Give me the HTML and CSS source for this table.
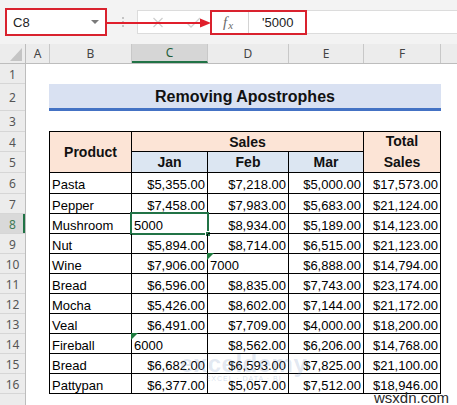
FILE: index.html
```html
<!DOCTYPE html>
<html>
<head>
<meta charset="utf-8">
<link rel="stylesheet" href="styles.css">
</head>
<body>
<div class="app">
  <div class="toolbar">
    <div class="namebox"><span class="ref">C8</span><span class="dd"></span></div>
    <div class="grip">
      <svg width="4" height="12" viewBox="0 0 4 12"><circle cx="2" cy="2" r="1" fill="#b4b4b4"/><circle cx="2" cy="6" r="1" fill="#b4b4b4"/><circle cx="2" cy="10" r="1" fill="#b4b4b4"/></svg>
    </div>
    <div class="actions">
      <svg class="ico-x" width="12" height="11" viewBox="0 0 12 11"><path d="M1.5 1 L10.5 10 M10.5 1 L1.5 10" stroke="#cfcfcf" stroke-width="1.3" fill="none"/></svg>
      <svg class="ico-ok" width="15" height="11" viewBox="0 0 15 11"><path d="M1 6 L5 10 L14 1" stroke="#cfcfcf" stroke-width="1.3" fill="none"/></svg>
    </div>
    <div class="fxbox">
      <span class="fx"><i>f</i><i class="sx">x</i></span>
      <span class="ftext">'5000</span>
    </div>
    <div class="fbar"></div>
    <svg class="arrow" width="110" height="14" viewBox="0 0 110 14"><path d="M0 7 L96 7" stroke="#e01e2b" stroke-width="2"/><polygon points="94,2.5 105,7 94,11.5" fill="#e01e2b"/></svg>
  </div>

  <div class="sheet">
    <div class="corner"><svg width="26" height="20" viewBox="0 0 26 20"><polygon points="22,4 22,17 10,17" fill="#c4c4c4"/></svg></div>
    <div class="colheads">
      <div class="ch w-a">A</div>
      <div class="ch w-b">B</div>
      <div class="ch w-c sel">C</div>
      <div class="ch w-d">D</div>
      <div class="ch w-e">E</div>
      <div class="ch w-f">F</div>
      <div class="ch w-g"></div>
    </div>
    <div class="rowheads">
      <div class="rh h20">1</div>
      <div class="rh h27">2</div>
      <div class="rh h21">3</div>
      <div class="rh h20">4</div>
      <div class="rh h21">5</div>
      <div class="rh h21">6</div>
      <div class="rh h20">7</div>
      <div class="rh h20 sel">8</div>
      <div class="rh h20">9</div>
      <div class="rh h20">10</div>
      <div class="rh h20">11</div>
      <div class="rh h20">12</div>
      <div class="rh h20">13</div>
      <div class="rh h20">14</div>
      <div class="rh h20">15</div>
      <div class="rh h20">16</div>
      <div class="rh h20"></div>
    </div>
    <div class="body">
      <div class="spacer"></div>
      <div class="title">Removing Apostrophes</div>
      <div class="spacer"></div>
      <div class="table">
        <div class="hd peach span-r2">Product</div>
        <div class="hd peach span-c3">Sales</div>
        <div class="hd peach span-r2 two">Total<br>Sales</div>
        <div class="hd blue">Jan</div>
        <div class="hd blue">Feb</div>
        <div class="hd blue">Mar</div>

        <div class="c">Pasta</div><div class="c n">$5,355.00</div><div class="c n">$7,218.00</div><div class="c n">$5,000.00</div><div class="c n">$17,573.00</div>
        <div class="c">Pepper</div><div class="c n">$7,458.00</div><div class="c n">$7,983.00</div><div class="c n">$5,683.00</div><div class="c n">$21,124.00</div>
        <div class="c">Mushroom</div><div class="c active">5000<span class="selbox"><span class="handle"></span></span></div><div class="c n">$8,934.00</div><div class="c n">$5,189.00</div><div class="c n">$14,123.00</div>
        <div class="c">Nut</div><div class="c n">$5,894.00</div><div class="c n">$8,714.00</div><div class="c n">$6,515.00</div><div class="c n">$21,123.00</div>
        <div class="c">Wine</div><div class="c n">$7,906.00</div><div class="c txt">7000<span class="tri"></span></div><div class="c n">$6,888.00</div><div class="c n">$14,794.00</div>
        <div class="c">Bread</div><div class="c n">$6,596.00</div><div class="c n">$8,835.00</div><div class="c n">$7,743.00</div><div class="c n">$23,174.00</div>
        <div class="c">Mocha</div><div class="c n">$5,426.00</div><div class="c n">$8,602.00</div><div class="c n">$7,144.00</div><div class="c n">$21,172.00</div>
        <div class="c">Veal</div><div class="c n">$6,491.00</div><div class="c n">$7,709.00</div><div class="c n">$4,000.00</div><div class="c n">$18,200.00</div>
        <div class="c">Fireball</div><div class="c txt">6000<span class="tri"></span></div><div class="c n">$8,562.00</div><div class="c n">$6,206.00</div><div class="c n">$14,768.00</div>
        <div class="c">Bread</div><div class="c n">$6,682.00</div><div class="c n">$6,593.00</div><div class="c n">$7,825.00</div><div class="c n">$21,100.00</div>
        <div class="c">Pattypan</div><div class="c n">$6,377.00</div><div class="c n">$5,057.00</div><div class="c n">$7,512.00</div><div class="c n">$18,946.00</div>
      </div>
    </div>
  </div>

  <div class="watermark"><span class="wm-big">exceldemy</span><span class="wm-small">EXCEL · DATA · BI</span></div>
  <div class="site">wsxdn.com</div>
</div>
</body>
</html>
```

FILE: styles.css
```css
* { box-sizing: border-box; }
html, body { margin: 0; padding: 0; }
body {
  width: 457px;
  height: 405px;
  overflow: hidden;
  background: #fff;
  font-family: "Liberation Sans", Arial, sans-serif;
  color: #000;
}
.app { position: relative; width: 457px; height: 405px; overflow: hidden; }

/* toolbar */
.toolbar {
  position: relative;
  height: 44px;
  background: #f3f3f3;
  display: flex;
  align-items: flex-start;
}
.namebox {
  margin: 8px 0 0 5px;
  width: 102px;
  height: 28px;
  border: 2px solid #d9222e;
  background: #fff;
  display: flex;
  align-items: center;
  padding-left: 6px;
  font-size: 13px;
  color: #222;
}
.namebox .dd {
  margin-left: auto;
  margin-right: 6px;
  width: 0; height: 0;
  border-left: 4px solid transparent;
  border-right: 4px solid transparent;
  border-top: 4px solid #7a7a7a;
}
.grip {
  width: 30px;
  height: 44px;
  display: flex;
  align-items: center;
  justify-content: center;
  padding-left: 1px;
  padding-bottom: 1px;
}
.actions {
  margin-top: 10px;
  width: 73px;
  height: 24px;
  background: #fff;
  border: 1px solid #dcdcdc;
  border-right: none;
  display: flex;
  align-items: center;
  padding-left: 14px;
  gap: 22px;
}
.fxbox {
  margin-top: 10px;
  width: 97px;
  height: 25px;
  border: 2px solid #d9222e;
  background: #fff;
  display: flex;
  align-items: center;
}
.fx {
  width: 37px;
  height: 100%;
  border-right: 1px solid #d4d4d4;
  display: flex;
  align-items: center;
  justify-content: center;
  font-family: "Liberation Serif", serif;
  color: #6a6a6a;
  font-size: 15px;
  padding-right: 4px;
}
.fx .sx { font-size: 11px; margin-top: 5px; margin-left: 1px; }
.ftext { padding-left: 13px; font-size: 13px; color: #222; }
.fbar {
  flex: 1;
  margin-top: 10px;
  height: 24px;
  background: #fff;
  border-top: 1px solid #dcdcdc;
  border-bottom: 1px solid #dcdcdc;
}
.arrow { position: absolute; left: 106px; top: 16px; }

/* sheet */
.sheet {
  display: grid;
  grid-template-columns: 26px 1fr;
  grid-template-rows: 20px 1fr;
}
.corner {
  background: #ececec;
  border-right: 1px solid #bdbdbd;
  border-bottom: 1px solid #bdbdbd;
}
.corner svg { display: block; }
.colheads {
  display: flex;
  height: 20px;
  background: #ececec;
  border-bottom: 1px solid #bdbdbd;
}
.ch {
  flex: none;
  height: 100%;
  border-right: 1px solid #c8c8c8;
  display: flex;
  align-items: center;
  justify-content: center;
  font-family: "Noto Sans", sans-serif;
  font-size: 12px;
  color: #444;
  padding-bottom: 1px;
}
.ch.sel {
  background: #d6d6d6;
  border-bottom: 2px solid #217346;
  color: #1f5e3a;
  padding-bottom: 0;
}
.w-a { width: 24px; }
.w-b { width: 82px; }
.w-c { width: 76px; }
.w-d { width: 81px; }
.w-e { width: 75px; }
.w-f { width: 77px; }
.w-g { flex: 1; border-right: none; }

.rowheads {
  display: flex;
  flex-direction: column;
  background: #ececec;
  border-right: 1px solid #bdbdbd;
}
.rh {
  flex: none;
  border-bottom: 1px solid #d6d6d6;
  display: flex;
  align-items: center;
  justify-content: center;
  font-family: "Noto Sans", sans-serif;
  font-size: 12px;
  color: #555;
  padding-top: 1px;
}
.rh.sel {
  background: #d9d9d9;
  color: #3f7a55;
  box-shadow: inset -2px 0 0 #217346;
}
.h20 { height: 20px; }
.h21 { height: 21px; }
.h27 { height: 27px; }

.body { padding-left: 23px; }
.spacer { height: 20px; }
.title {
  width: 392px;
  height: 27px;
  background: #d9e1f2;
  border-bottom: 3px solid #4472c4;
  padding-top: 2px;
  line-height: 22px;
  text-align: center;
  font-weight: bold;
  font-size: 16px;
  color: #111;
}

.table {
  width: 392px;
  display: grid;
  grid-template-columns: 82px 76px 81px 75px 77px;
  grid-template-rows: 20px 21px 21px repeat(10, 20px);
  border-left: 1px solid #000;
  border-top: 1px solid #000;
}
.hd {
  border-right: 1px solid #000;
  border-bottom: 1px solid #000;
  display: flex;
  align-items: center;
  justify-content: center;
  text-align: center;
  font-weight: bold;
  font-size: 14px;
  color: #111;
}
.peach { background: #fce4d6; }
.blue { background: #dce6f2; }
.span-r2 { grid-row: span 2; }
.span-c3 { grid-column: span 3; }
.two { line-height: 21px; }

.c {
  position: relative;
  border-right: 1px solid #000;
  border-bottom: 1px solid #000;
  padding: 3px 2px 0 2px;
  line-height: 17px;
  font-size: 13px;
  white-space: nowrap;
}
.n { text-align: right; }
.selbox {
  position: absolute;
  left: -2px;
  top: -2px;
  right: -2px;
  bottom: -2px;
  border: 2px solid #217346;
}
.handle {
  position: absolute;
  right: -4px;
  bottom: -4px;
  width: 6px;
  height: 6px;
  background: #217346;
  border: 1px solid #fff;
}
.tri {
  position: absolute;
  left: -1px;
  top: -1px;
  width: 0;
  height: 0;
  border-top: 7px solid #1e7b3e;
  border-right: 7px solid transparent;
}

.watermark {
  position: absolute;
  left: 180px;
  top: 353px;
  display: flex;
  flex-direction: column;
  align-items: center;
  pointer-events: none;
}
.wm-big {
  font-family: "Liberation Sans", sans-serif;
  font-weight: bold;
  font-size: 24px;
  letter-spacing: 0.5px;
  color: rgba(110, 140, 190, 0.2);
  line-height: 22px;
}
.wm-small {
  font-size: 7px;
  letter-spacing: 1px;
  color: rgba(110, 140, 190, 0.28);
}
.site {
  position: absolute;
  left: 374px;
  top: 390px;
  font-family: "Liberation Sans", sans-serif;
  font-size: 15px;
  color: #2a2a2a;
  line-height: 15px;
}
```
